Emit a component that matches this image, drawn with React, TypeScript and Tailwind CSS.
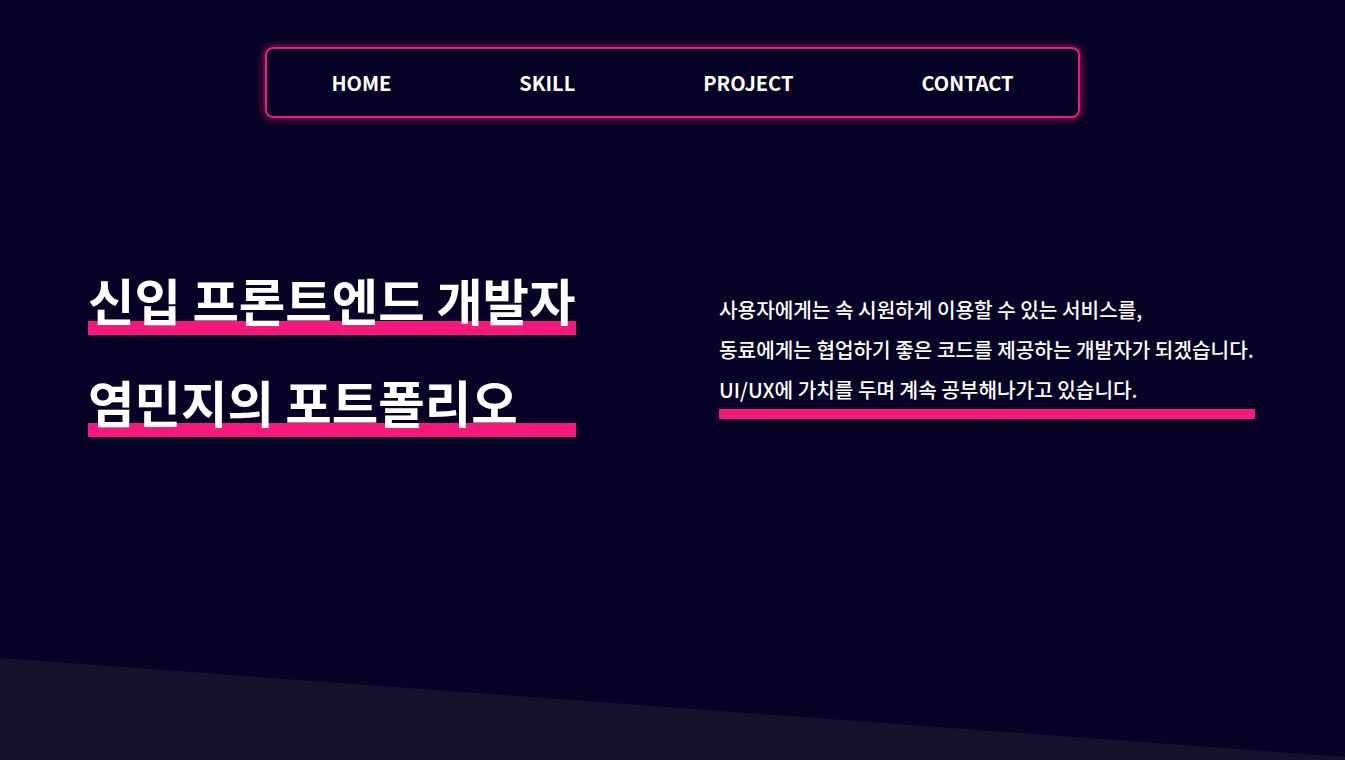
import React from "react";

const font = { fontFamily: '"Noto Sans CJK KR", "Noto Sans", sans-serif' };

export default function App() {
  const nav = ["HOME", "SKILL", "PROJECT", "CONTACT"];
  return (
    <div
      className="h-[760px] w-full overflow-hidden bg-[#070326] text-white flex flex-col"
      style={font}
    >
      <div className="flex justify-center pt-[47px]">
        <nav className="h-[71px] flex items-center gap-[128px] px-[64px] rounded-[8px] border-2 border-[#ec1c77] shadow-[0_0_8px_rgba(236,28,119,0.8)]">
          {nav.map((n) => (
            <span key={n} className="text-[20px] font-bold leading-none">
              {n}
            </span>
          ))}
        </nav>
      </div>

      <section className="h-[478px] flex items-center justify-between pl-[88px] pr-[90px]">
        <h1 className="flex flex-col gap-[30px] font-bold text-[50.5px] leading-[72px] mb-[14px]">
          <span className="block bg-[linear-gradient(to_top,#f5197b_14px,transparent_14px)]">
            신입 프론트엔드 개발자
          </span>
          <span className="block bg-[linear-gradient(to_top,#f5197b_14px,transparent_14px)]">
            염민지의 포트폴리오
          </span>
        </h1>
        <div className="flex flex-col w-[536px] mb-[5px]">
          <p className="text-[20.2px] leading-[40px] font-medium whitespace-nowrap">
            사용자에게는 속 시원하게 이용할 수 있는 서비스를,
            <br />
            동료에게는 협업하기 좋은 코드를 제공하는 개발자가 되겠습니다.
            <br />
            UI/UX에 가치를 두며 계속 공부해나가고 있습니다.
          </p>
          <div className="h-[10px] bg-[#f5197b] mt-[-1px]" />
        </div>
      </section>

      <div className="flex-1" />
      <div className="h-[102px] bg-[#15132b] [clip-path:polygon(0_0,100%_97%,100%_100%,0_100%)]" />
    </div>
  );
}
